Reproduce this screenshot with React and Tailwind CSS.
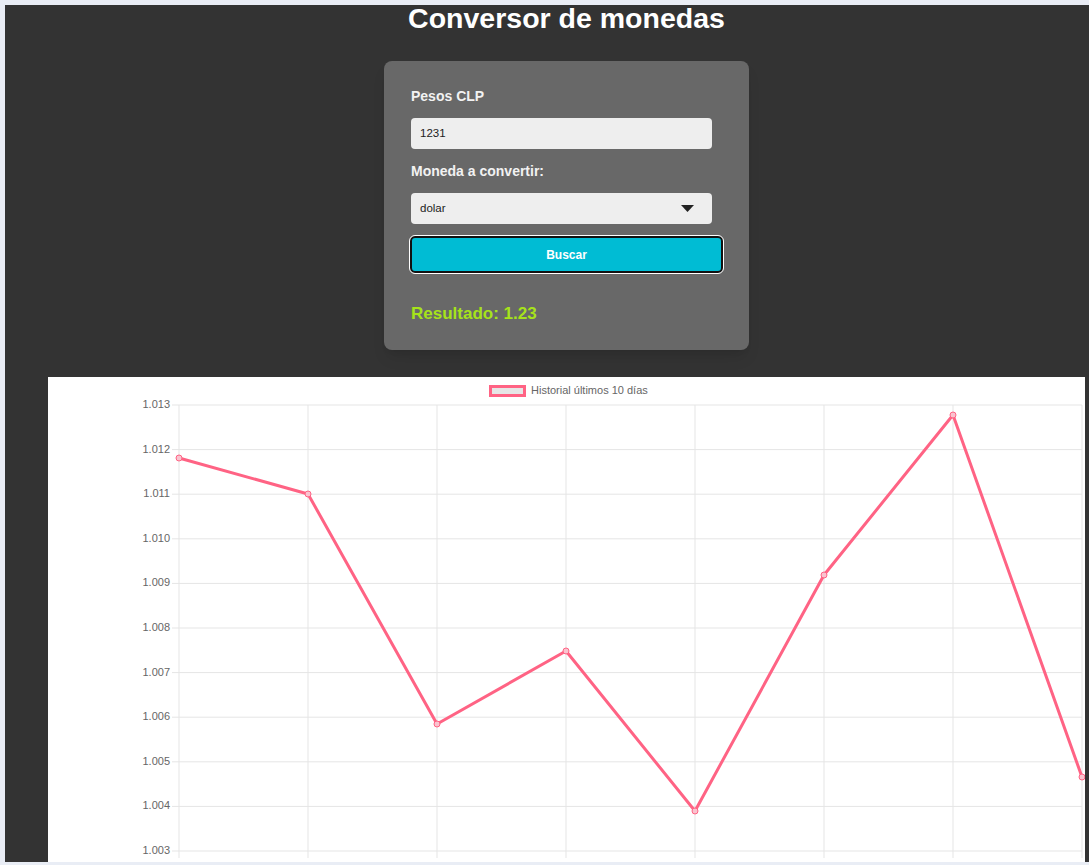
const points = [
  [131, 81],
  [260, 117],
  [389, 347],
  [518, 274],
  [647, 434],
  [776, 198],
  [905, 38],
  [1034, 400],
]

const yLabels = ['1.013', '1.012', '1.011', '1.010', '1.009', '1.008', '1.007', '1.006', '1.005', '1.004', '1.003']

function HistoryChart() {
  const rowY = (i) => 28 + i * 44.6
  const cols = [131, 260, 389, 518, 647, 776, 905, 1034]
  return (
    <svg width="1037" height="500" viewBox="0 0 1037 500" style={{ fontFamily: '"Liberation Sans", Arial, sans-serif' }}>
      {/* legend */}
      <rect x="442.5" y="9.5" width="34" height="9" fill="#e6e6e6" stroke="#ff6384" strokeWidth="3" />
      <text x="483" y="14" fontSize="11" fill="#666" dominantBaseline="middle">Historial últimos 10 días</text>

      {/* grid */}
      {yLabels.map((l, i) => (
        <g key={l}>
          <line x1="124" x2="1034" y1={rowY(i)} y2={rowY(i)} stroke="#e5e5e5" strokeWidth="1" />
          <text x="122" y={rowY(i)} fontSize="11" fill="#666" textAnchor="end" dominantBaseline="middle">{l}</text>
        </g>
      ))}
      {cols.map((x) => (
        <line key={x} x1={x} x2={x} y1="28" y2="481" stroke="#e5e5e5" strokeWidth="1" />
      ))}

      {/* data */}
      <polyline
        points={points.map((p) => p.join(',')).join(' ')}
        fill="none"
        stroke="#ff6384"
        strokeWidth="3"
        strokeLinejoin="round"
      />
      {points.map(([x, y]) => (
        <circle key={x} cx={x} cy={y} r="3" fill="#f9c3cf" stroke="#ff6384" strokeWidth="1" />
      ))}
    </svg>
  )
}

export default function App() {
  return (
    <div className="h-[865px] w-[1089px] overflow-hidden bg-[#e9edf5] pl-[5px] pt-[5px] font-['Liberation_Sans',Arial,sans-serif]">
      <div className="flex h-[857px] w-[1123px] flex-col items-center overflow-hidden bg-[#333333]">
        <h1 className="-mt-[3px] text-[28.5px] font-bold leading-[32px] text-white">Conversor de monedas</h1>

        <div className="mt-[27px] w-[365px] shrink-0 rounded-[8px] bg-[#686868] px-[27px] pb-[26px] pt-[27px] shadow-lg">
          <label className="block text-[14px] font-bold leading-[16px] text-[#f2f2f2]">Pesos CLP</label>
          <div className="mt-[14px] flex h-[31px] w-[301px] items-center rounded-[4px] bg-[#eeeeee] pl-[9px] text-[11.5px] text-[#222]">
            1231
          </div>

          <label className="mt-[14px] block text-[14px] font-bold leading-[16px] text-[#f2f2f2]">Moneda a convertir:</label>
          <div className="mt-[14px] flex h-[31px] w-[301px] items-center justify-between rounded-[4px] bg-[#eeeeee] pl-[9px] pr-[18px] text-[11.5px] text-[#222]">
            <span>dolar</span>
            <svg width="13" height="7" viewBox="0 0 13 7">
              <path d="M0 0 H13 L6.5 7 Z" fill="#222" />
            </svg>
          </div>

          <button className="-ml-[1px] mt-[12px] flex h-[37px] w-[313px] items-center justify-center rounded-[5px] border-2 border-[#111] bg-[#00bcd4] text-[12px] font-bold text-white outline outline-1 outline-white">
            Buscar
          </button>

          <p className="mt-[31px] text-[17px] font-bold leading-[20px] text-[#a6e31a]">Resultado: 1.23</p>
        </div>

        <div className="mt-[27px] h-[500px] w-[1037px] shrink-0 bg-white">
          <HistoryChart />
        </div>
      </div>
    </div>
  )
}
